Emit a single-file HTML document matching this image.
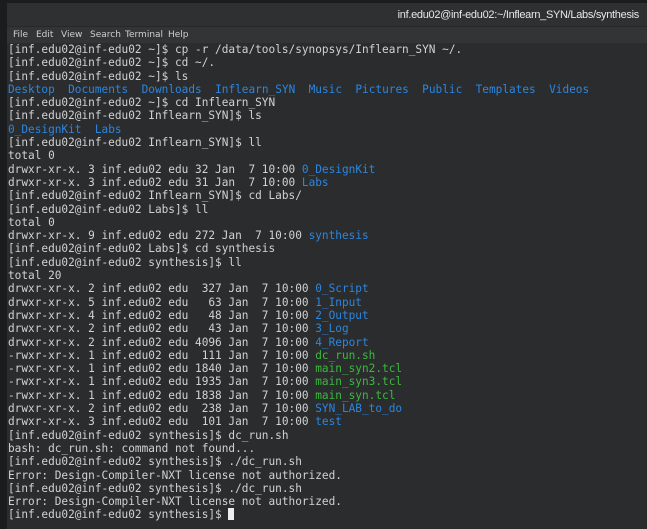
<!DOCTYPE html>
<html><head><style>
html,body{margin:0;padding:0;width:647px;height:529px;overflow:hidden;background:#1b1c1d}
.win{position:absolute;left:7px;top:3px;width:640px;height:526px;background:#2a2c2e;border-radius:4px 0 0 0}
.title{position:absolute;left:0;top:0;width:640px;height:23px;background:#2e3032;font:11px "Liberation Sans",sans-serif;color:#e8e8e8;border-bottom:1px solid #262829}
.title span{position:absolute;right:8px;top:6px;letter-spacing:-0.3px}
.menu{position:absolute;left:0;top:24px;width:640px;height:16px;background:#323436;font:9px "DejaVu Sans",sans-serif;color:#cfcfcf}
.menu span{position:absolute;top:3px}
pre{position:absolute;left:1px;top:40px;margin:0;font:11.1px/13.3px "DejaVu Sans Mono","Liberation Mono",monospace;color:#d2d2d2}
.b{color:#2c86e0}.g{color:#3cb93c}
.cur{display:inline-block;width:6px;height:12px;background:#eee;vertical-align:-2px}
</style></head><body>
<div class="win">
<div class="title"><span>inf.edu02@inf-edu02:~/Inflearn_SYN/Labs/synthesis</span></div>
<div class="menu"><span style="left:6px">File</span><span style="left:29px">Edit</span><span style="left:54px">View</span><span style="left:83px">Search</span><span style="left:118px">Terminal</span><span style="left:161px">Help</span></div>
<pre>[inf.edu02@inf-edu02 ~]$ cp -r /data/tools/synopsys/Inflearn_SYN ~/.
[inf.edu02@inf-edu02 ~]$ cd ~/.
[inf.edu02@inf-edu02 ~]$ ls
<span class="b">Desktop</span>  <span class="b">Documents</span>  <span class="b">Downloads</span>  <span class="b">Inflearn_SYN</span>  <span class="b">Music</span>  <span class="b">Pictures</span>  <span class="b">Public</span>  <span class="b">Templates</span>  <span class="b">Videos</span>
[inf.edu02@inf-edu02 ~]$ cd Inflearn_SYN
[inf.edu02@inf-edu02 Inflearn_SYN]$ ls
<span class="b">0_DesignKit</span>  <span class="b">Labs</span>
[inf.edu02@inf-edu02 Inflearn_SYN]$ ll
total 0
drwxr-xr-x. 3 inf.edu02 edu 32 Jan  7 10:00 <span class="b">0_DesignKit</span>
drwxr-xr-x. 3 inf.edu02 edu 31 Jan  7 10:00 <span class="b">Labs</span>
[inf.edu02@inf-edu02 Inflearn_SYN]$ cd Labs/
[inf.edu02@inf-edu02 Labs]$ ll
total 0
drwxr-xr-x. 9 inf.edu02 edu 272 Jan  7 10:00 <span class="b">synthesis</span>
[inf.edu02@inf-edu02 Labs]$ cd synthesis
[inf.edu02@inf-edu02 synthesis]$ ll
total 20
drwxr-xr-x. 2 inf.edu02 edu  327 Jan  7 10:00 <span class="b">0_Script</span>
drwxr-xr-x. 5 inf.edu02 edu   63 Jan  7 10:00 <span class="b">1_Input</span>
drwxr-xr-x. 4 inf.edu02 edu   48 Jan  7 10:00 <span class="b">2_Output</span>
drwxr-xr-x. 2 inf.edu02 edu   43 Jan  7 10:00 <span class="b">3_Log</span>
drwxr-xr-x. 2 inf.edu02 edu 4096 Jan  7 10:00 <span class="b">4_Report</span>
-rwxr-xr-x. 1 inf.edu02 edu  111 Jan  7 10:00 <span class="g">dc_run.sh</span>
-rwxr-xr-x. 1 inf.edu02 edu 1840 Jan  7 10:00 <span class="g">main_syn2.tcl</span>
-rwxr-xr-x. 1 inf.edu02 edu 1935 Jan  7 10:00 <span class="g">main_syn3.tcl</span>
-rwxr-xr-x. 1 inf.edu02 edu 1838 Jan  7 10:00 <span class="g">main_syn.tcl</span>
drwxr-xr-x. 2 inf.edu02 edu  238 Jan  7 10:00 <span class="b">SYN_LAB_to_do</span>
drwxr-xr-x. 3 inf.edu02 edu  101 Jan  7 10:00 <span class="b">test</span>
[inf.edu02@inf-edu02 synthesis]$ dc_run.sh
bash: dc_run.sh: command not found...
[inf.edu02@inf-edu02 synthesis]$ ./dc_run.sh
Error: Design-Compiler-NXT license not authorized.
[inf.edu02@inf-edu02 synthesis]$ ./dc_run.sh
Error: Design-Compiler-NXT license not authorized.
[inf.edu02@inf-edu02 synthesis]$ <span class="cur"></span></pre>
</div>
</body></html>
